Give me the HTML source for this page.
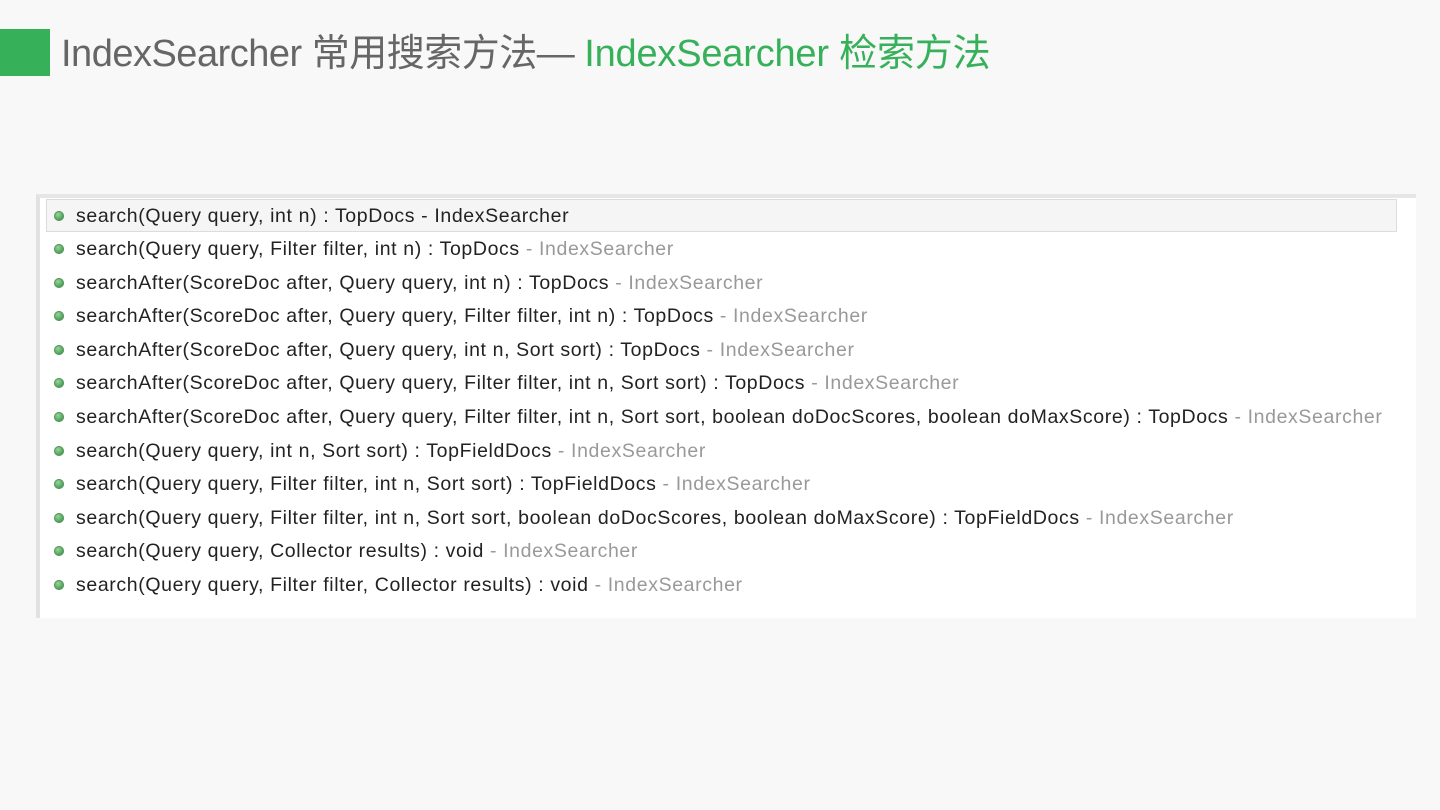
<!DOCTYPE html>
<html><head><meta charset="utf-8"><style>
body{margin:0;width:1440px;height:810px;background:#f8f8f8;position:relative;overflow:hidden;font-family:"Liberation Sans","Noto Sans CJK SC",sans-serif}
.sq{position:absolute;left:0;top:29px;width:50px;height:47px;background:#36b15a}
.title{position:absolute;left:61px;top:30px;font-size:38px;line-height:48px;color:#666;white-space:nowrap;letter-spacing:-0.5px}
.title span{color:#36b15a;letter-spacing:-0.2px}
.panel{position:absolute;left:36px;top:194px;width:1380px;height:424px;background:#fff;border-top:4px solid #e6e6e6;box-sizing:border-box;border-left:4px solid #e2e2e2}
.sel{position:absolute;left:46px;top:199px;width:1351px;height:33px;background:#f5f5f5;border:1px solid #dcdcdc;box-sizing:border-box}
.row{position:absolute;left:76px;font-size:19.5px;letter-spacing:0.62px;line-height:24px;color:#222;white-space:nowrap}
.row i{font-style:normal;color:#999}
.dot{position:absolute;left:54px;width:10px;height:10px;border-radius:50%;background:radial-gradient(circle at 40% 35%,#9ad39a,#3f9a4f 70%);box-shadow:0 0 0 1px #5a9a62 inset}
</style></head><body>
<div class="sq"></div>
<div class="title">IndexSearcher 常用搜索方法— <span>IndexSearcher 检索方法</span></div>
<div class="panel"></div>
<div class="sel"></div>
<div class="dot" style="top:211px"></div><div class="row" style="top:204px">search(Query query, int n) : TopDocs - IndexSearcher</div>
<div class="dot" style="top:244px"></div><div class="row" style="top:237px">search(Query query, Filter filter, int n) : TopDocs <i>- IndexSearcher</i></div>
<div class="dot" style="top:278px"></div><div class="row" style="top:271px">searchAfter(ScoreDoc after, Query query, int n) : TopDocs <i>- IndexSearcher</i></div>
<div class="dot" style="top:311px"></div><div class="row" style="top:304px">searchAfter(ScoreDoc after, Query query, Filter filter, int n) : TopDocs <i>- IndexSearcher</i></div>
<div class="dot" style="top:345px"></div><div class="row" style="top:338px">searchAfter(ScoreDoc after, Query query, int n, Sort sort) : TopDocs <i>- IndexSearcher</i></div>
<div class="dot" style="top:378px"></div><div class="row" style="top:371px">searchAfter(ScoreDoc after, Query query, Filter filter, int n, Sort sort) : TopDocs <i>- IndexSearcher</i></div>
<div class="dot" style="top:412px"></div><div class="row" style="top:405px">searchAfter(ScoreDoc after, Query query, Filter filter, int n, Sort sort, boolean doDocScores, boolean doMaxScore) : TopDocs <i>- IndexSearcher</i></div>
<div class="dot" style="top:446px"></div><div class="row" style="top:439px">search(Query query, int n, Sort sort) : TopFieldDocs <i>- IndexSearcher</i></div>
<div class="dot" style="top:479px"></div><div class="row" style="top:472px">search(Query query, Filter filter, int n, Sort sort) : TopFieldDocs <i>- IndexSearcher</i></div>
<div class="dot" style="top:513px"></div><div class="row" style="top:506px">search(Query query, Filter filter, int n, Sort sort, boolean doDocScores, boolean doMaxScore) : TopFieldDocs <i>- IndexSearcher</i></div>
<div class="dot" style="top:546px"></div><div class="row" style="top:539px">search(Query query, Collector results) : void <i>- IndexSearcher</i></div>
<div class="dot" style="top:580px"></div><div class="row" style="top:573px">search(Query query, Filter filter, Collector results) : void <i>- IndexSearcher</i></div>
</body></html>
